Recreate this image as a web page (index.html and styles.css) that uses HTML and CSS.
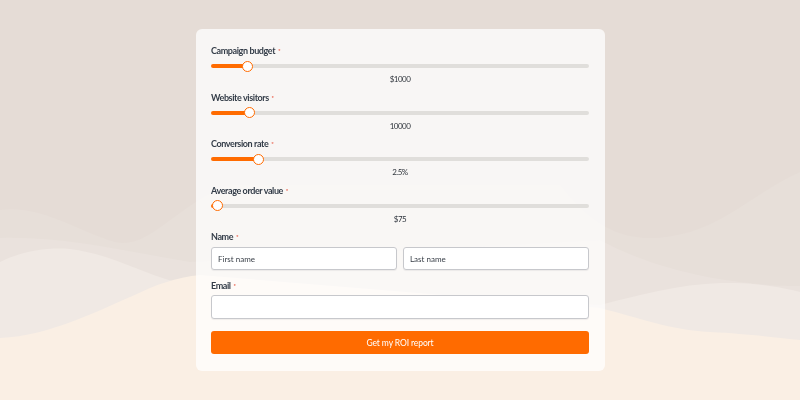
FILE: index.html
```html
<!DOCTYPE html>
<html lang="en">
<head>
  <meta charset="UTF-8" />
  <meta name="viewport" content="width=device-width, initial-scale=1" />
  <title>ROI Calculator</title>
  <link rel="stylesheet" href="styles.css">
</head>
<body>
  <svg class="backdrop" viewBox="0 0 800 400" preserveAspectRatio="none" aria-hidden="true">
    <rect width="800" height="400" fill="#e5dcd6" />
    <path fill="#e7dfd9" d="M0,210 C40,204 80,232 115,242 C150,250 175,205 230,185 L560,185 C600,238 640,246 690,232 C730,220 760,190 800,172 L800,400 L0,400 Z" />
    <path fill="#eae2dd" d="M0,238 C60,236 120,250 190,262 L600,240 C640,262 690,276 740,282 C770,286 790,286 800,286 L800,400 L0,400 Z" />
    <path fill="#f0e9e4" d="M0,262 C20,252 45,247 70,249 C110,254 140,272 175,282 L600,305 C650,292 690,282 735,283 C765,284 785,288 800,292 L800,400 L0,400 Z" />
    <path fill="#faefe4" d="M0,338 C50,336 100,310 150,288 C175,278 190,276 200,275 L600,308 C640,318 670,330 710,332 C750,334 780,338 800,340 L800,400 L0,400 Z" />
  </svg>

  <div class="roi-card">
    <form id="roiForm">
      <div class="range-field">
        <label for="budget">Campaign budget <span class="req">*</span></label>
        <input type="range" id="budget" name="budget" min="0" max="12000" step="100" value="1000" data-format="${v}" />
        <output class="range-value" for="budget">$1000</output>
      </div>

      <div class="range-field">
        <label for="visitors">Website visitors <span class="req">*</span></label>
        <input type="range" id="visitors" name="visitors" min="0" max="110000" step="1000" value="10000" data-format="{v}" />
        <output class="range-value" for="visitors">10000</output>
      </div>

      <div class="range-field">
        <label for="conversion">Conversion rate <span class="req">*</span></label>
        <input type="range" id="conversion" name="conversion" min="0" max="22" step="0.5" value="2.5" data-format="{v}%" />
        <output class="range-value" for="conversion">2.5%</output>
      </div>

      <div class="range-field">
        <label for="order">Average order value <span class="req">*</span></label>
        <input type="range" id="order" name="order" min="70" max="1300" step="5" value="75" data-format="${v}" />
        <output class="range-value" for="order">$75</output>
      </div>

      <div class="text-field">
        <label>Name <span class="req">*</span></label>
        <div class="name-row">
          <input type="text" name="first" placeholder="First name" autocomplete="given-name" />
          <input type="text" name="last" placeholder="Last name" autocomplete="family-name" />
        </div>
      </div>

      <div class="text-field email-field">
        <label for="email">Email <span class="req">*</span></label>
        <input type="email" id="email" name="email" autocomplete="email" />
      </div>

      <button type="submit">Get my ROI report</button>
    </form>
  </div>

  <script>
    const THUMB = 11;

    // paint the orange part of the track up to the thumb centre
    function paintRange(input) {
      const min = parseFloat(input.min);
      const max = parseFloat(input.max);
      const f = (parseFloat(input.value) - min) / (max - min);
      const w = input.clientWidth;
      const centre = THUMB / 2 + f * (w - THUMB);
      input.style.setProperty('--fill', (centre / w * 100).toFixed(2) + '%');
      const out = input.parentElement.querySelector('.range-value');
      out.textContent = input.dataset.format.replace('{v}', input.value);
    }

    document.querySelectorAll('input[type=range]').forEach(function(input) {
      paintRange(input);
      input.addEventListener('input', function() { paintRange(input); });
    });

    document.getElementById('roiForm').addEventListener('submit', function(event) {
      event.preventDefault();
    });
  </script>
</body>
</html>
```

FILE: styles.css
```css
body {
  font-family: 'Lato', 'Liberation Sans', sans-serif;
  margin: 0;
  height: 400px;
  overflow: hidden;
  display: flex;
  justify-content: center;
  align-items: flex-start;
  color: #333c48;
}
.backdrop {
  position: fixed;
  top: 0;
  left: 0;
  width: 100%;
  height: 100%;
  z-index: -1;
}
.roi-card {
  position: relative;
  margin-top: 29px;
  margin-left: 1px;
  width: 409px;
  box-sizing: border-box;
  padding: 16px 16px 17px 15px;
  background: rgba(255, 255, 255, 0.74);
  border-radius: 6px;
}
form {
  display: flex;
  flex-direction: column;
}
label {
  display: block;
  font-size: 9px;
  line-height: 12px;
  font-weight: 700;
  letter-spacing: -0.4px;
  color: #333c48;
}
.req {
  color: #e8553f;
  font-size: 6px;
  vertical-align: 1px;
  margin-left: 1px;
}
.range-field {
  margin-bottom: 6px;
}
.range-field label {
  margin-bottom: 3px;
}
.range-value {
  display: block;
  padding-top: 2px;
  text-align: center;
  font-size: 8px;
  line-height: 11.5px;
  letter-spacing: -0.5px;
  color: #2d333b;
}
input[type=range] {
  -webkit-appearance: none;
  appearance: none;
  display: block;
  width: 100%;
  height: 12px;
  margin: 0;
  background: transparent;
  --fill: 10%;
}
input[type=range]:focus {
  outline: none;
}
input[type=range]::-webkit-slider-runnable-track {
  height: 4px;
  border-radius: 2px;
  background: linear-gradient(to right, #ff6b00 var(--fill), #e0dedb var(--fill));
}
input[type=range]::-webkit-slider-thumb {
  -webkit-appearance: none;
  width: 11px;
  height: 11px;
  margin-top: -3.5px;
  box-sizing: border-box;
  border-radius: 50%;
  background: #fff;
  border: 1.5px solid #ff6b00;
}
.text-field label {
  margin-bottom: 4px;
}
.name-row {
  display: grid;
  grid-template-columns: 1fr 1fr;
  gap: 6px;
}
input[type=text], input[type=email] {
  display: block;
  width: 100%;
  box-sizing: border-box;
  height: 23px;
  padding: 0 6px;
  margin: 0;
  border: 1px solid #c7c8cc;
  border-radius: 3px;
  background: #fff;
  box-shadow: 0 1px 1px rgba(0, 0, 0, 0.06);
  font-family: inherit;
  font-size: 8px;
  color: #333c48;
}
input::placeholder {
  color: #3a4049;
}
.email-field {
  margin-top: 10px;
}
.email-field label {
  margin-bottom: 3px;
}
.email-field input {
  height: 24px;
}
button {
  margin-top: 12px;
  height: 23px;
  border: none;
  border-radius: 3px;
  background: #ff6b00;
  color: #fff;
  font-family: inherit;
  font-size: 8.5px;
  letter-spacing: -0.1px;
  cursor: pointer;
}
button:hover {
  background: #f06200;
}
```
